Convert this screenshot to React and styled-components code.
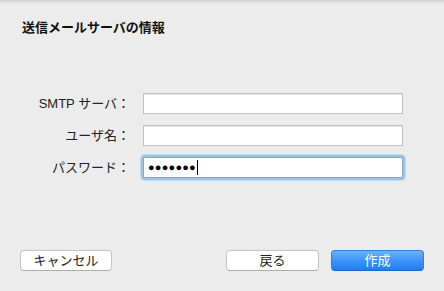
import React from 'react';
import styled, { createGlobalStyle } from 'styled-components';

const GlobalStyle = createGlobalStyle`
  html, body {
    margin: 0;
    padding: 0;
    background: #ececec;
  }
  * {
    box-sizing: border-box;
  }
`;

const Sheet = styled.div`
  width: 444px;
  height: 291px;
  display: flex;
  flex-direction: column;
  background: linear-gradient(to bottom, #cfcfcf 0px, #e2e2e2 2px, #ececec 5px);
  font-family: "Liberation Sans", "Noto Sans CJK JP", sans-serif;
  color: #1a1a1a;
  overflow: hidden;
`;

const Title = styled.h1`
  margin: 0;
  padding: 20px 0 0 22px;
  font-size: 13px;
  line-height: 16px;
  font-weight: bold;
  color: #111;
`;

const Form = styled.div`
  display: grid;
  grid-template-columns: 130px 260px;
  column-gap: 13px;
  row-gap: 11px;
  align-items: center;
  margin-top: 57px;
`;

const Label = styled.label`
  text-align: right;
  font-size: 13px;
  line-height: 21px;
  color: #222;
  white-space: nowrap;
`;

const Field = styled.div`
  height: 21px;
  background: #fff;
  border: 1px solid ${(p) => (p.$focused ? '#7ea8d4' : '#c2c2c2')};
  box-shadow: ${(p) => (p.$focused ? '0 0 0 2.5px #9ec3e6' : 'inset 0 1px 0 #e4e4e4')};
  border-radius: ${(p) => (p.$focused ? '2px' : '0')};
  display: flex;
  align-items: center;
  padding-left: 4px;
`;

const Dots = styled.span`
  font-size: 11px;
  letter-spacing: 0.2px;
  color: #000;
  line-height: 1;
`;

const Caret = styled.span`
  width: 1px;
  height: 15px;
  background: #000;
  margin-left: 1px;
`;

const Footer = styled.div`
  margin-top: auto;
  margin-bottom: 20px;
  display: flex;
  padding: 0 20px;
  align-items: center;
`;

const Spacer = styled.div`
  flex: 1;
`;

const Button = styled.button`
  width: ${(p) => p.$w || 93}px;
  height: 21px;
  margin-left: ${(p) => p.$ml || 0}px;
  border-radius: 4px;
  font-family: "Liberation Sans", "Noto Sans CJK JP", sans-serif;
  font-size: 13px;
  line-height: 19px;
  padding: 0;
  cursor: default;
  border: 1px solid ${(p) => (p.$primary ? '#2f7de6' : '#c4c4c4')};
  border-bottom-color: ${(p) => (p.$primary ? '#1f64c8' : '#adadad')};
  color: ${(p) => (p.$primary ? '#fff' : '#222')};
  background: ${(p) =>
    p.$primary
      ? 'linear-gradient(to bottom, #6cb2fb 0%, #3e94f9 50%, #1f7ef8 100%)'
      : '#fff'};
`;

export default function App() {
  return (
    <Sheet>
      <GlobalStyle />
      <Title>送信メールサーバの情報</Title>
      <Form>
        <Label>SMTP サーバ：</Label>
        <Field />
        <Label>ユーザ名：</Label>
        <Field />
        <Label>パスワード：</Label>
        <Field $focused>
          <Dots>●●●●●●●</Dots>
          <Caret />
        </Field>
      </Form>
      <Footer>
        <Button $w={92}>キャンセル</Button>
        <Spacer />
        <Button>戻る</Button>
        <Button $primary $ml={12}>作成</Button>
      </Footer>
    </Sheet>
  );
}
